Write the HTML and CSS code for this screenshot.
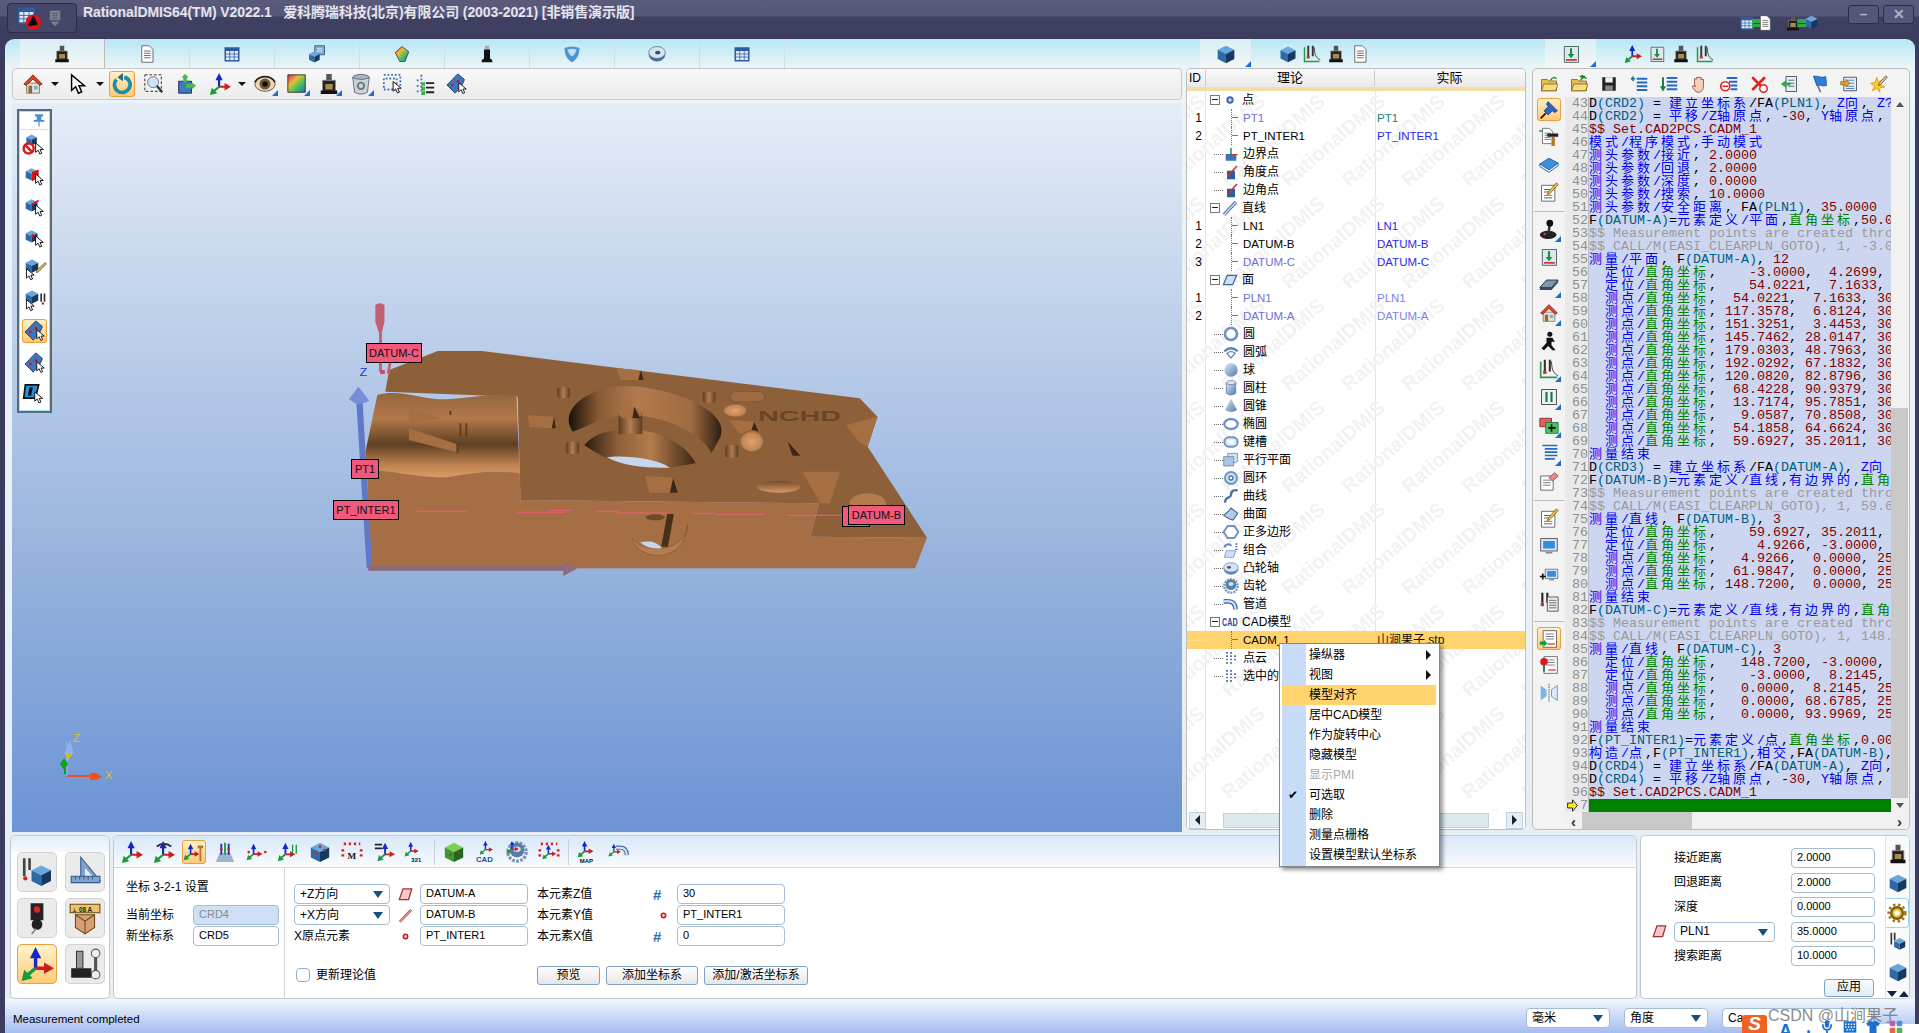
FILE: index.html
```html
<!DOCTYPE html>
<html lang="zh">
<head>
<meta charset="utf-8">
<title>RationalDMIS64</title>
<link rel="stylesheet" href="styles.css">
</head>
<body>
<svg class="defs" width="0" height="0">
<defs>
<linearGradient id="gb" x1="0" y1="0" x2="1" y2="1"><stop offset="0" stop-color="#dfeaf8"/><stop offset="1" stop-color="#4f78b0"/></linearGradient>
<symbol id="cube" viewBox="0 0 24 24"><path fill="#6aa6de" d="M12 2 22 7 12 12 2 7z"/><path fill="#2e6aa8" d="M2 7 12 12V23L2 18z"/><path fill="#16395f" d="M22 7 12 12V23L22 18z"/></symbol>
<symbol id="cur" viewBox="0 0 24 24"><path fill="#fff" stroke="#000" stroke-width="1.6" d="M5 2V19L9.500 15 12.500 22 16 20.500 13 13.800H19z"/></symbol>
<symbol id="home" viewBox="0 0 24 24"><path fill="#e8e2d2" stroke="#777" d="M5 11H19V22H5z"/><path fill="#d8452a" stroke="#8a2412" d="M12 2 22 12 19.500 13.500 12 6.500 4.500 13.500 2 12z"/><path fill="#8c6a3a" d="M7 14H11V22H7z"/><path fill="#7fb0e0" d="M13 14H17V18H13z"/></symbol>
<symbol id="spin" viewBox="0 0 24 24"><path fill="none" stroke="#1c8fa8" stroke-width="4" d="M14.500 4.500A8.500 8.500 0 1 1 6 7"/><path fill="#1c6f8a" d="M13 0V9L7 4.500z"/></symbol>
<symbol id="zoomd" viewBox="0 0 24 24"><path fill="none" stroke="#222" stroke-dasharray="3 2" d="M2 2H20V20H2z"/><circle cx="11" cy="10" r="6" fill="#cfe2f5" stroke="#778"/><path stroke="#333" stroke-width="2.500" d="M15 14 21 21"/></symbol>
<symbol id="fit" viewBox="0 0 24 24"><path fill="#3d7cc0" stroke="#225" d="M4 9H18V22H4z"/><path fill="#4cb848" d="M11 1 15 5H13V10H9V5H7z"/><path fill="#4cb848" d="M23 14 18 18V16H12V12H18V10z"/></symbol>
<symbol id="axes" viewBox="0 0 24 24"><path stroke="#1428c8" stroke-width="2.400" d="M11 15V6"/><path fill="#1428c8" d="M11 0 15 8H7z"/><path stroke="#c81e1e" stroke-width="2.400" d="M11 15H19"/><path fill="#c81e1e" d="M24 15 17 19V11z"/><path stroke="#1a9a3a" stroke-width="2.400" d="M11 15 5 20"/><path fill="#1a9a3a" d="M1 24 3 16 9 22z"/></symbol>
<symbol id="eye" viewBox="0 0 24 24"><ellipse cx="12" cy="12" rx="11" ry="8" fill="#e9d7b8" stroke="#6b5234"/><circle cx="12" cy="12" r="6" fill="#6e5a38"/><circle cx="12" cy="12" r="3" fill="#111"/><path stroke="#2a2a2a" stroke-width="2" fill="none" d="M1 10C6 2 18 2 23 10"/></symbol>
<linearGradient id="rb" x1="0" y1="0" x2="1" y2="1"><stop offset="0" stop-color="#e02060"/><stop offset=".35" stop-color="#e8c030"/><stop offset=".65" stop-color="#40c060"/><stop offset="1" stop-color="#3060e0"/></linearGradient>
<symbol id="colr" viewBox="0 0 24 24"><path fill="url(#rb)" stroke="#333" d="M2 2H21V21H2z"/></symbol>
<symbol id="gem" viewBox="0 0 24 24"><path fill="url(#rb)" stroke="#333" d="M12 2 21 9 16 22H9L3 10z"/></symbol>
<symbol id="probe" viewBox="0 0 24 24"><path fill="#555" d="M9 1H15V8H9z"/><path fill="#222" stroke="#888" d="M5 8H19V20H5z"/><path fill="#a88c4a" d="M8 12H16V18H8z"/><path fill="#111" d="M3 19H21V23H3z"/></symbol>
<symbol id="blk" viewBox="0 0 24 24"><path fill="#aaa" d="M9 1H15V6H9z"/><path fill="#111" d="M8 6H16V18L19 20V23H5V20L8 18z"/></symbol>
<symbol id="bin" viewBox="0 0 24 24"><ellipse cx="12" cy="5" rx="9" ry="3.500" fill="#a9b4bd" stroke="#667"/><path fill="#c9d2d8" stroke="#667" d="M3 5 5 21Q12 25 19 21L21 5Q12 9 3 5z"/><circle cx="12" cy="14" r="3.500" fill="none" stroke="#677" stroke-width="2"/></symbol>
<symbol id="dots" viewBox="0 0 24 24"><path fill="none" stroke="#3d6fb5" stroke-width="2" stroke-dasharray="2 2" d="M2 2H20V15M4 6H16V18H2V4"/><use href="#cur" x="9" y="8" width="15" height="15"/></symbol>
<symbol id="dotl" viewBox="0 0 24 24"><path stroke="#3d6fb5" stroke-width="2" stroke-dasharray="2 2" fill="none" d="M8 2V22M3 8H6M3 14H6M3 20H6"/><path stroke="#222" stroke-width="2" d="M13 11H22M13 16H22M13 21H22"/><path fill="#38b048" d="M8 10H12V14H8zM8 15H12V19H8zM8 20H12V24H8z"/></symbol>
<symbol id="surf" viewBox="0 0 24 24"><path fill="#3f74b8" stroke="#1d3e70" d="M1 13C6 9 8 5 13 1L20 7C19 12 14 18 10 22z"/><circle cx="7" cy="13" r="1.300" fill="#e00"/><circle cx="13" cy="9" r="1.300" fill="#e00"/><use href="#cur" x="11" y="9" width="14" height="15"/></symbol>
<symbol id="page" viewBox="0 0 24 24"><path fill="#fff" stroke="#444" d="M5 1H15L20 6V23H5z"/><path stroke="#444" d="M8 8H17M8 11H17M8 14H17M8 17H17"/></symbol>
<symbol id="tbl" viewBox="0 0 24 24"><path fill="#2d5c9e" d="M2 3H22V22H2z"/><path fill="#dfeaf6" d="M4 8H20V20H4z"/><path stroke="#2d5c9e" d="M4 12H20M4 16H20M9 8V20M15 8V20"/></symbol>
<symbol id="cubep" viewBox="0 0 24 24"><path fill="#7fb0e0" stroke="#245" d="M9 1H22V13H9z"/><path stroke="#fff" d="M12 5H19M12 8H19"/><use href="#cube" x="0" y="7" width="17" height="17"/></symbol>
<symbol id="shld" viewBox="0 0 24 24"><path fill="#4f93cc" d="M2 4Q12 0 22 4C22 13 18 20 12 23 6 20 2 13 2 4z"/><path fill="#bfe0f5" d="M6 6Q12 4 18 6 16 14 12 15 8 14 6 6z"/></symbol>
<symbol id="disc" viewBox="0 0 24 24"><ellipse cx="12" cy="13" rx="11" ry="9" fill="#4d6f9e"/><ellipse cx="12" cy="10" rx="11" ry="8" fill="#d9e3ef" stroke="#4d6f9e"/><ellipse cx="13" cy="10" rx="3.500" ry="2.500" fill="#2d4d7c"/></symbol>
<symbol id="pin" viewBox="0 0 24 24"><path fill="#2f66c0" stroke="#123a80" d="M11 2 22 13 19 15 16 13 11 18 6 13 11 8 9 5z"/><path stroke="#111" stroke-width="2" d="M8 16 2 22"/></symbol>
<symbol id="hamm" viewBox="0 0 24 24"><use href="#page" x="0" y="0" width="20" height="24"/><path fill="#222" d="M10 9H23V13H10z"/><path fill="#b5762e" d="M15 13H19V24H15z"/><path stroke="#1aa048" stroke-width="2" d="M0 6H5"/></symbol>
<symbol id="book" viewBox="0 0 24 24"><path fill="#3f8ed8" stroke="#1c5c9c" d="M1 12 12 5 23 11 12 19z"/><path fill="#e6eef6" stroke="#1c5c9c" d="M1 12 12 19 23 11V14L12 22 1 15z"/></symbol>
<symbol id="note" viewBox="0 0 24 24"><path fill="#fff" stroke="#555" d="M3 4H19V23H3z"/><path stroke="#c33" d="M6 16H16"/><path stroke="#444" d="M6 9H13M6 12H13M6 19H16"/><path fill="#f0c040" stroke="#7a5a14" d="M21 1 23 3 13 14 10 15 11 12z"/></symbol>
<symbol id="joy" viewBox="0 0 24 24"><ellipse cx="11" cy="19" rx="10" ry="5" fill="#222"/><path stroke="#333" stroke-width="3" d="M11 18 13 7"/><circle cx="13" cy="5" r="4" fill="#111"/><circle cx="7" cy="18" r="1.500" fill="#e33"/></symbol>
<symbol id="down" viewBox="0 0 24 24"><path fill="#dfe6ee" stroke="#355" d="M4 3H21V22H4z"/><path stroke="#149040" stroke-width="2.500" d="M12 5V13"/><path fill="#149040" d="M8 12H16L12 17z"/><path stroke="#c33" stroke-width="2" d="M6 19H19"/></symbol>
<symbol id="plate" viewBox="0 0 24 24"><path fill="#7f95ae" stroke="#223" d="M1 15 9 6H23L15 15z"/><path fill="#3a4a5c" d="M1 15H15L23 6V9L15 18H1z"/></symbol>
<symbol id="run" viewBox="0 0 24 24"><circle cx="13" cy="4" r="3" fill="#111"/><path fill="#111" d="M9 8H16L19 13 15 13 15 17 20 23H16L11 18 6 23 3 21 9 14z"/></symbol>
<symbol id="trn" viewBox="0 0 24 24"><path stroke="#333" stroke-width="2.500" d="M7 1V15M13 1V15"/><path fill="#c33" d="M5 14H9V18H5z"/><path fill="none" stroke="#2a9a4a" stroke-width="2" d="M2 3V22H22"/><path fill="none" stroke="#222" d="M15 3C15 13 18 18 23 20"/></symbol>
<symbol id="arrv" viewBox="0 0 24 24"><path fill="#e8eef2" stroke="#333" d="M3 3H21V21H3z"/><path stroke="#147a3a" stroke-width="2.500" d="M9 6V18M15 6V18"/></symbol>
<symbol id="pls" viewBox="0 0 24 24"><path fill="#e06060" stroke="#822" d="M1 4H15V14H1z"/><path fill="#50c050" stroke="#175" d="M8 9H23V22H8z"/><path stroke="#111" stroke-width="2" d="M15 11V20M11 15.500H20"/></symbol>
<symbol id="lins" viewBox="0 0 24 24"><path stroke="#2468c8" stroke-width="2" d="M4 3H22M7 7H22M7 11H22M7 15H22M7 19H19"/></symbol>
<symbol id="eras" viewBox="0 0 24 24"><path fill="#fff" stroke="#555" d="M2 6H17V23H2z"/><path stroke="#666" d="M5 11H14M5 14H14M5 17H14"/><path fill="#e88a8a" stroke="#844" d="M12 8 19 2 23 6 16 12z"/></symbol>
<symbol id="mon" viewBox="0 0 24 24"><path fill="#dce3ea" stroke="#445" d="M2 3H22V18H2z"/><path fill="#2f8fe0" d="M5 6H19V15H5z"/><path fill="#889" d="M8 19H16V21H8z"/></symbol>
<symbol id="monp" viewBox="0 0 24 24"><use href="#mon" x="6" y="4" width="18" height="18"/><path stroke="#111" stroke-width="2" d="M1 15H8M4.500 11.500V18.500"/></symbol>
<symbol id="prl" viewBox="0 0 24 24"><path stroke="#222" stroke-width="2.500" d="M4 1V13M10 1V13"/><path fill="#c33" d="M2 13H6V17H2z"/><path fill="#eee" stroke="#444" d="M10 6H23V23H10z"/><path stroke="#555" d="M12 10H21M12 13H21M12 16H21M12 19H21"/></symbol>
<symbol id="sel" viewBox="0 0 24 24"><path fill="#fff" stroke="#555" d="M5 2H21V22H5z"/><path stroke="#667" d="M8 6H18M8 9H18M8 12H18"/><path stroke="#c33" stroke-width="1.500" d="M10 18H19"/><path fill="#1a9a3a" d="M1 15H6V13L10 17 6 21V19H1z"/></symbol>
<symbol id="redp" viewBox="0 0 24 24"><path fill="#fff" stroke="#555" d="M6 2H22V22H6z"/><path stroke="#667" d="M9 6H19M9 9H19M9 12H19"/><path stroke="#c33" stroke-width="1.500" d="M11 18H20"/><circle cx="6" cy="8" r="4.500" fill="#d21e1e"/><path stroke="#173" stroke-width="2" d="M6 12V20"/></symbol>
<symbol id="mirr" viewBox="0 0 24 24"><path fill="#7fb4e8" d="M2 3 9 8V16L2 21z"/><path stroke="#444" stroke-dasharray="2 1" d="M12 1V23"/><path fill="#dbe9f8" stroke="#5a8cc8" d="M22 3 15 8V16L22 21z"/></symbol>
<symbol id="foldr" viewBox="0 0 24 24"><path fill="#e8c050" stroke="#7a5a14" d="M2 6H10L12 8H22V21H2z"/><path fill="#f6dc80" stroke="#7a5a14" d="M5 12H24L21 21H2z"/><path stroke="#2a9a3a" stroke-width="2" fill="none" d="M14 7Q18 1 22 5"/></symbol>
<symbol id="fpl" viewBox="0 0 24 24"><use href="#foldr"/><path stroke="#1a7a2a" stroke-width="2" d="M13 2H20M16.500 0V5"/></symbol>
<symbol id="save" viewBox="0 0 24 24"><path fill="#222" d="M3 3H21V21H3z"/><path fill="#eee" d="M7 3H17V10H7z"/><path fill="#888" d="M7 14H17V21H7z"/></symbol>
<symbol id="lst" viewBox="0 0 24 24"><path stroke="#2468c8" stroke-width="2.400" d="M9 5H23M9 10H23M9 15H23M9 20H23"/><path fill="none" stroke="#1a7a9a" stroke-width="2" d="M7 5H2M5 2 2 5 5 8"/></symbol>
<symbol id="lsd" viewBox="0 0 24 24"><path stroke="#2468c8" stroke-width="2.400" d="M9 4H23M9 9H23M9 14H23M9 19H23"/><path stroke="#147a3a" stroke-width="2.500" d="M4 3V17"/><path fill="#147a3a" d="M0 15H8L4 22z"/></symbol>
<symbol id="hand" viewBox="0 0 24 24"><path fill="#f4d0b8" stroke="#80321c" d="M6 11V5H9V3H12V3.500H15V6H18V14C18 20 15 23 11 23 8 23 5 20 3 15L5 14 7 16z"/></symbol>
<symbol id="lno" viewBox="0 0 24 24"><path stroke="#2468c8" stroke-width="2.400" d="M9 4H23M12 9H23M14 14H23M14 19H23"/><circle cx="7" cy="15" r="6" fill="#fff" stroke="#d22" stroke-width="2.200"/><path stroke="#d22" stroke-width="2.200" d="M3 15H11"/></symbol>
<symbol id="xno" viewBox="0 0 24 24"><path stroke="#d8281e" stroke-width="3.500" d="M3 3 20 20M20 3 3 20"/><circle cx="18" cy="18" r="5" fill="#fff" stroke="#d22" stroke-width="2"/></symbol>
<symbol id="pgl" viewBox="0 0 24 24"><path fill="#e8eef6" stroke="#234" d="M8 2H22V22H8z"/><path stroke="#345" d="M11 7H19M11 11H19M11 15H19"/><path fill="#2fa84a" d="M1 12 8 7V10H14V14H8V17z"/></symbol>
<symbol id="flag" viewBox="0 0 24 24"><path stroke="#766" stroke-width="2" d="M5 1 14 23"/><path fill="#2f7fd8" stroke="#16508c" d="M5 2C10 0 14 5 21 2L22 14C16 16 12 12 9 14z"/></symbol>
<symbol id="pgr" viewBox="0 0 24 24"><path fill="#e8eef6" stroke="#234" d="M5 3H22V21H5z"/><path stroke="#2468c8" d="M8 7H19M8 11H19M8 15H19M8 18H19"/><path fill="#f0a020" stroke="#8a5a10" d="M1 9H8V6L13 11 8 16V13H1z"/></symbol>
<symbol id="burst" viewBox="0 0 24 24"><path fill="#f8d020" stroke="#d89010" d="M9 3 11 9 17 7 14 13 20 16 13 17 13 23 9 18 3 21 6 15 1 11 7 10z"/><path fill="#d8c8a0" stroke="#5a4a2a" d="M21 1 23 3 14 13 11 14 12 11z"/></symbol>
<symbol id="pts" viewBox="0 0 24 24"><path stroke="#3b5fa5" stroke-width="2.500" stroke-dasharray="2.500 2.500" d="M6 3V21M12 3V21M18 8V16"/></symbol>
<symbol id="pnt" viewBox="0 0 24 24"><circle cx="12" cy="12" r="4" fill="#cfe0f4" stroke="#3a68a8" stroke-width="3"/></symbol>
<symbol id="lin" viewBox="0 0 24 24"><path stroke="#3f6fb0" stroke-width="5" d="M3 22 21 3"/><path stroke="#cfe0f4" stroke-width="2" d="M3 22 21 3"/></symbol>
<symbol id="pla" viewBox="0 0 24 24"><path fill="#cfe0f4" stroke="#39679f" stroke-width="1.800" d="M8 5H22L16 19H2z"/></symbol>
<symbol id="cir" viewBox="0 0 24 24"><circle cx="12" cy="12" r="9" fill="#fff" stroke="#6f94c4" stroke-width="4"/></symbol>
<symbol id="arc" viewBox="0 0 24 24"><path fill="none" stroke="#5f86ba" stroke-width="3.500" d="M2 11Q12 2 22 11"/><path fill="#fff" stroke="#5f86ba" stroke-width="2" d="M6 14Q12 9 18 14L12 21z"/></symbol>
<symbol id="sph" viewBox="0 0 24 24"><circle cx="12" cy="12" r="10" fill="url(#gb)"/></symbol>
<symbol id="cyl" viewBox="0 0 24 24"><path fill="url(#gb)" stroke="#4a6a9a" d="M5 4H19V20Q12 25 5 20z"/><ellipse cx="12" cy="4" rx="7" ry="3" fill="#dce8f6" stroke="#4a6a9a"/></symbol>
<symbol id="con" viewBox="0 0 24 24"><path fill="url(#gb)" d="M12 1 21 18Q12 24 3 18z"/></symbol>
<symbol id="ell" viewBox="0 0 24 24"><ellipse cx="12" cy="12" rx="10" ry="7.500" fill="#fff" stroke="#6f94c4" stroke-width="3.500"/></symbol>
<symbol id="slt" viewBox="0 0 24 24"><rect x="2" y="5" width="20" height="14" rx="7" fill="#dce8f6" stroke="#6f94c4" stroke-width="3"/><rect x="7" y="9" width="10" height="6" rx="3" fill="#fff"/></symbol>
<symbol id="par" viewBox="0 0 24 24"><path fill="#cfe0f4" stroke="#4a73a8" d="M7 2H22V14L18 16H7z"/><path fill="#a9c4e4" stroke="#4a73a8" d="M1 7H16V21H1z"/></symbol>
<symbol id="tor" viewBox="0 0 24 24"><circle cx="12" cy="12" r="9" fill="#cfe0f4" stroke="#6f94c4" stroke-width="3"/><circle cx="12" cy="12" r="3" fill="#fff" stroke="#4a73a8" stroke-width="2"/></symbol>
<symbol id="crv" viewBox="0 0 24 24"><path fill="none" stroke="#4a73a8" stroke-width="3.500" d="M3 22C3 12 12 16 12 10 12 4 18 2 22 4"/></symbol>
<symbol id="srf" viewBox="0 0 24 24"><path fill="#b4cbe8" stroke="#3c6496" stroke-width="1.600" d="M1 14 9 7 12 3 22 11 15 21 9 19z"/></symbol>
<symbol id="hex" viewBox="0 0 24 24"><path fill="#fff" stroke="#6f94c4" stroke-width="3" d="M7 3H17L23 12 17 21H7L1 12z"/></symbol>
<symbol id="grp" viewBox="0 0 24 24"><path fill="none" stroke="#5f86ba" stroke-width="3" d="M2 8C4 2 12 2 12 6"/><path fill="#cfe0f4" stroke="#5f86ba" d="M5 13H19L16 23H2z"/><path stroke="#3f6fb0" stroke-width="3" stroke-dasharray="2 2" d="M20 2V13"/></symbol>
<symbol id="cam" viewBox="0 0 24 24"><ellipse cx="12" cy="14" rx="11" ry="8" fill="#5f86ba"/><ellipse cx="12" cy="11" rx="11" ry="7" fill="#d4e2f2" stroke="#5f86ba"/><ellipse cx="9" cy="11" rx="3" ry="2" fill="#456"/></symbol>
<symbol id="ger" viewBox="0 0 24 24"><circle cx="12" cy="12" r="10" fill="none" stroke="#7793b8" stroke-width="3.500" stroke-dasharray="3 1.500"/><circle cx="12" cy="10" r="8" fill="#5a7ca8"/><ellipse cx="12" cy="9" rx="4" ry="3" fill="#cfe0f4"/></symbol>
<symbol id="pip" viewBox="0 0 24 24"><path fill="none" stroke="#3f6fb0" stroke-width="7" d="M1 8H8Q18 8 19 20"/><path fill="none" stroke="#dce8f6" stroke-width="3" d="M1 8H8Q18 8 19 20"/></symbol>
<symbol id="bpt" viewBox="0 0 24 24"><path fill="#3f74b8" d="M4 12H20V22H4z"/><path stroke="#147a3a" stroke-width="2" d="M12 13V3"/><path stroke="#c33" stroke-width="2" d="M12 13H22"/></symbol>
<symbol id="apt" viewBox="0 0 24 24"><path fill="#2e5c98" d="M6 10H18V23H6z"/><path stroke="#c33" stroke-width="2.500" d="M7 18 21 3"/></symbol>
<symbol id="fpla" viewBox="0 0 24 24"><path fill="#f4c8c8" stroke="#a03030" stroke-width="2" d="M8 3H22L17 20H2z"/></symbol>
<symbol id="flin" viewBox="0 0 24 24"><path stroke="#c04040" stroke-width="4" d="M3 22 21 3"/><path stroke="#f4d8d8" stroke-width="1.500" d="M3 22 21 3"/></symbol>
<symbol id="fpt" viewBox="0 0 24 24"><circle cx="12" cy="12" r="3.500" fill="#f4c8c8" stroke="#c02020" stroke-width="2.500"/></symbol>
</defs>
</svg>

<div class="app">
  <header class="titlebar">
    <div class="appbtn">
      <svg class="ic26" viewBox="0 0 30 30"><use href="#tbl" width="24" height="24"/><circle cx="20" cy="20" r="9" fill="#d81818"/><path stroke="#111" stroke-width="3" d="M15 24 20 15 24 23"/></svg>
      <svg class="ic20" viewBox="0 0 24 24"><path fill="#7d7f94" stroke="#5c5e74" d="M5 2H19V15H5z"/><path stroke="#50526a" d="M8 6H16M8 9H16M8 12H16"/><path fill="#7d7f94" d="M6 17H18L12 23z"/></svg>
    </div>
    <div class="title">RationalDMIS64(TM) V2022.1 &nbsp; 爱科腾瑞科技(北京)有限公司 (2003-2021) [非销售演示版]</div>
    <div class="winr">
      <svg class="ic24" viewBox="0 0 34 24"><use href="#tbl" x="0" y="2" width="16" height="20"/><use href="#page" x="18" y="2" width="16" height="20"/><path fill="#2fa84a" d="M13 8H21V12H13zM13 13H21V16H13z"/></svg>
      <svg class="ic24 wmid" viewBox="0 0 34 24"><use href="#probe" x="0" y="2" width="16" height="20"/><use href="#cube" x="19" y="2" width="15" height="18"/><path fill="#2fa84a" d="M13 8H21V12H13zM13 13H21V16H13z"/></svg>
      <div class="winb">–</div><div class="winb">✕</div>
    </div>
  </header>

  <div class="frame">
    <div class="upper">
      <section class="viewcol">
        <nav class="tabs">
          <div class="tab on"><svg class="i"><use href="#probe"/></svg></div>
          <div class="tab"><svg class="i"><use href="#page"/></svg></div>
          <div class="tab"><svg class="i"><use href="#tbl"/></svg></div>
          <div class="tab"><svg class="i"><use href="#cubep"/></svg></div>
          <div class="tab"><svg class="i"><use href="#gem"/></svg></div>
          <div class="tab"><svg class="i"><use href="#blk"/></svg></div>
          <div class="tab"><svg class="i"><use href="#shld"/></svg></div>
          <div class="tab"><svg class="i"><use href="#disc"/></svg></div>
          <div class="tab"><svg class="i"><use href="#tbl"/></svg></div>
        </nav>
        <div class="toolbar">
          <span class="bt"><svg class="i"><use href="#home"/></svg></span><span class="car"></span>
          <span class="bt cm"><svg class="i"><use href="#cur"/></svg></span><span class="car"></span>
          <span class="bt sl sp"><svg class="i"><use href="#spin"/></svg></span>
          <span class="bt sx"><svg class="i"><use href="#zoomd"/></svg></span>
          <span class="bt"><svg class="i"><use href="#fit"/></svg></span>
          <span class="bt ax"><svg class="i"><use href="#axes"/></svg></span><span class="car cn"></span>
          <span class="bt co"><svg class="i"><use href="#eye"/></svg></span>
          <span class="bt co"><svg class="i"><use href="#colr"/></svg></span>
          <span class="bt co"><svg class="i"><use href="#probe"/></svg></span>
          <span class="bt co"><svg class="i"><use href="#bin"/></svg></span>
          <span class="bt"><svg class="i"><use href="#dots"/></svg></span>
          <span class="bt"><svg class="i"><use href="#dotl"/></svg></span>
          <span class="bt"><svg class="i"><use href="#surf"/></svg></span>
        </div>
        <div class="viewport">
          <svg class="model" viewBox="0 0 1568 900" preserveAspectRatio="none">
            <defs>
              <linearGradient id="wav" x1="0" y1="310" x2="0" y2="565" gradientUnits="userSpaceOnUse"><stop offset="0" stop-color="#96653e"/><stop offset=".3" stop-color="#b27849"/><stop offset=".6" stop-color="#5f3f24"/><stop offset=".85" stop-color="#c08553"/><stop offset="1" stop-color="#dc9d68"/></linearGradient>
              <linearGradient id="bor" x1="0" y1="0" x2="1" y2="0"><stop offset="0" stop-color="#1a1108"/><stop offset=".2" stop-color="#8a5c36"/><stop offset=".45" stop-color="#b37a4c"/><stop offset=".8" stop-color="#a06b42"/><stop offset="1" stop-color="#2c1c0e"/></linearGradient>
              <linearGradient id="hol" x1="0" y1="0" x2="1" y2="0"><stop offset="0" stop-color="#2a1c0e"/><stop offset=".3" stop-color="#8d5f39"/><stop offset=".6" stop-color="#b47b4c"/><stop offset="1" stop-color="#3a2614"/></linearGradient>
              <linearGradient id="pil" x1="0" y1="0" x2="1" y2="0"><stop offset="0" stop-color="#5c3d22"/><stop offset=".5" stop-color="#b57c4e"/><stop offset="1" stop-color="#5c3d22"/></linearGradient>
              <radialGradient id="bal" cx=".5" cy=".55" r=".55"><stop offset="0" stop-color="#e2a36d"/><stop offset=".75" stop-color="#c08553"/><stop offset="1" stop-color="#7d5430"/></radialGradient>
              <linearGradient id="elg" x1="0" y1="0" x2="0" y2="1"><stop offset="0" stop-color="#6f4a2a"/><stop offset="1" stop-color="#d89a66"/></linearGradient>
            </defs>
            <polygon fill="#8e603a" points="165,305 175,240 298,183 410,183 1365,325 1410,380 1385,470 1535,743 1240,740 1262,640 507,630 500,320"/>
            <polygon fill="#a56e43" points="1330,405 1410,380 1385,470 1365,458"/>
            <polygon fill="#a56e43" points="1220,545 1315,545 1290,640 1265,640"/>
            <polygon fill="#a66e44" points="118,480 140,540 505,545 507,630 1262,640 1240,740 1535,743 1505,835 125,835"/>
            <path fill="url(#wav)" d="M145,315C200,295 260,330 320,328C380,325 450,305 497,320L505,550C450,540 400,545 320,562C250,565 180,540 118,540L115,485Z"/>
            <polygon fill="#a56e43" points="225,355 305,385 225,400"/>
            <polygon fill="#a56e43" points="225,415 345,462 345,487 225,450"/>
            <path stroke="#5f3f24" stroke-width="5" d="M330,362V375M355,400V440M370,400V440M348,460V490"/>
            <path fill="url(#bor)" d="M640,425C600,360 680,290 770,288C880,288 1040,360 1013,440L990,490C960,410 800,340 700,395C670,410 650,420 640,425Z"/>
            <path fill="url(#hol)" d="M668,465C700,420 760,415 800,420C870,425 930,470 950,520L885,533L725,505C700,490 680,475 668,465Z"/>
            <path fill="#c5d6ed" d="M725,502C770,495 850,505 885,533C830,535 770,530 725,502Z"/>
            <rect x="755" y="370" width="60" height="62" fill="url(#pil)"/>
            <ellipse cx="785" cy="370" rx="30" ry="18" fill="#a56e43"/>
            <polygon fill="#3c2614" points="795,350 810,385 790,385"/>
            <polygon fill="#a56e43" points="750,235 805,240 810,270 760,270"/>
            <polygon fill="#3c2614" points="805,270 812,240 818,270"/>
            <polygon fill="#a56e43" points="525,375 590,380 590,415 530,412"/>
            <polygon fill="#3c2614" points="586,415 592,380 596,415"/>
            <polygon fill="#a56e43" points="823,558 890,562 905,608 833,608"/>
            <polygon fill="#3c2614" points="885,608 893,565 905,608"/>
            <rect x="600" y="292" width="32" height="33" rx="6" fill="url(#pil)"/>
            <rect x="622" y="455" width="33" height="37" rx="6" fill="url(#pil)"/>
            <rect x="968" y="305" width="32" height="33" rx="6" fill="url(#pil)"/>
            <rect x="1025" y="465" width="33" height="38" rx="6" fill="url(#pil)"/>
            <rect x="1037" y="305" width="88" height="30" rx="15" fill="#a06b42" stroke="#5f3f24"/>
            <ellipse cx="1050" cy="360" rx="30" ry="20" fill="url(#bal)"/>
            <polygon fill="#a56e43" points="1035,390 1100,395 1115,430 1060,430"/>
            <polygon fill="#3c2614" points="1090,425 1098,395 1110,425"/>
            <ellipse cx="1092" cy="452" rx="30" ry="32" fill="url(#bal)"/>
            <text class="mtext" x="1108" y="392" textLength="210" lengthAdjust="spacingAndGlyphs">NCHD</text>
            <polygon fill="#3c2614" points="1183,455 1215,497 1195,497"/>
            <ellipse cx="1160" cy="590" rx="55" ry="18" fill="url(#elg)"/>
            <ellipse cx="1385" cy="640" rx="46" ry="30" fill="#b47b4c"/>
            <path fill="#b57c4e" stroke="#5f3f24" d="M790,745C800,810 920,830 930,705C925,760 880,775 860,775C830,775 805,770 790,745Z"/>
            <path fill="#c5d6ed" d="M810,757C830,752 850,752 865,775C840,778 820,770 810,757Z"/>
            <polygon fill="#4a3018" points="878,672 895,672 880,770 863,770"/>
            <ellipse cx="848" cy="682" rx="24" ry="9" fill="#6f4a2a"/>
            <path fill="none" stroke="#ef5c80" stroke-width="3" d="M245,664H372M498,667H622M578,661H638M695,664H755M750,669H878M938,670H1000M1002,673H1125M1180,676H1340"/>
            <path fill="#5f78c8" d="M92,340H108L132,835H118Z"/>
            <path fill="#6f87d6" opacity=".9" d="M97,290 125,332 97,346 73,328Z"/>
            <path fill="#8a6878" d="M122,828H620V842H122Z"/>
            <path fill="#8f6a80" d="M615,815 650,836 615,858Z"/>
            <path fill="#c25f70" d="M140,45Q150,35 163,45V95L157,125H148L140,95Z"/>
            <path stroke="#c25f70" stroke-width="7" d="M153,120V245M178,215 172,250"/>
            <rect x="152" y="240" width="12" height="12" fill="#d04a5c"/>
            <text class="mz" x="100" y="258">Z</text>
          </svg>
          <div class="lab lab-c">DATUM-C</div>
          <div class="lab lab-p">PT1</div>
          <div class="lab lab-i">PT_INTER1</div>
          <div class="lab lab-bb"></div>
          <div class="lab lab-b">DATUM-B</div>

          <svg class="triad" viewBox="0 0 120 120">
            <path stroke="#8aa8e8" stroke-width="2" d="M27 76V42"/>
            <path fill="#8fb0f0" d="M30 40 34 54H24Z"/>
            <path stroke="#d8c020" stroke-width="2" d="M28 54V60M26 53 28 57M32 53 29 57"/>
            <path fill="#10a010" d="M24 58 28 64 24 70 20 64Z"/>
            <path stroke="#10a010" stroke-width="2" d="M25 66V74"/>
            <path stroke="#f05020" stroke-width="2" d="M27 76H52"/>
            <path fill="#f05020" d="M50 73H56L62 77 56 80H50Z"/>
            <text class="tz" x="33" y="42">Z</text>
            <text class="tz" x="65" y="79">X</text>
          </svg>

          <aside class="pinpanel">
            <div class="pinhead"><svg class="i14" viewBox="0 0 24 24"><path fill="#4a8fd0" d="M5 2H19V6H16V12H21V15H13V23H11V15H3V12H8V6H5z"/></svg></div>
            <span class="pb"><svg class="i26" viewBox="0 0 30 30"><use href="#cube" x="4" y="0" width="15" height="15"/><circle cx="8" cy="18" r="6" fill="#fff" stroke="#d61c1c" stroke-width="3"/><path stroke="#d61c1c" stroke-width="3" d="M4 14 12 22"/><use href="#cur" x="13" y="9" width="16" height="18"/></svg></span>
            <span class="pb"><svg class="i26" viewBox="0 0 30 30"><use href="#cube" x="3" y="3" width="17" height="17"/><path fill="#e01010" d="M12 9 20 6V16L12 20z"/><use href="#cur" x="13" y="9" width="16" height="18"/></svg></span>
            <span class="pb"><svg class="i26" viewBox="0 0 30 30"><use href="#cube" x="3" y="3" width="17" height="17"/><path stroke="#e01010" stroke-width="2" d="M11 11 20 6"/><use href="#cur" x="13" y="9" width="16" height="18"/></svg></span>
            <span class="pb"><svg class="i26" viewBox="0 0 30 30"><use href="#cube" x="3" y="3" width="17" height="17"/><circle cx="13" cy="11" r="2" fill="#e01010"/><use href="#cur" x="13" y="9" width="16" height="18"/></svg></span>
            <span class="pb"><svg class="i26" viewBox="0 0 30 30"><use href="#cube" x="3" y="1" width="18" height="18"/><use href="#cur" x="2" y="11" width="16" height="18"/><path fill="#f0c040" stroke="#555" d="M28 6 29 8 20 17 17 18 18 15z"/></svg></span>
            <span class="pb"><svg class="i26" viewBox="0 0 30 30"><use href="#cube" x="3" y="1" width="18" height="18"/><use href="#cur" x="2" y="11" width="16" height="18"/><path stroke="#333" stroke-width="2" d="M23 6V16M27 6V16"/><circle cx="25" cy="18" r="1.500" fill="#d22"/></svg></span>
            <span class="pb sl"><svg class="i"><use href="#surf"/></svg></span>
            <span class="pb"><svg class="i"><use href="#surf"/></svg></span>
            <span class="pb"><svg class="i26" viewBox="0 0 30 30"><path fill="#2a90dd" stroke="#111" stroke-width="2" d="M4 4H20L16 20H2z"/><path fill="#111" d="M9 7H13L11 17H7z"/><use href="#cur" x="12" y="10" width="16" height="18"/></svg></span>
          </aside>
        </div>
      </section>

      <section class="treecol">
        <div class="subtabs">
          <div class="subtab co"><svg class="i"><use href="#cube"/></svg></div>
          <svg class="i st1"><use href="#cube"/></svg>
          <svg class="i"><use href="#trn"/></svg>
          <svg class="i"><use href="#probe"/></svg>
          <svg class="i"><use href="#page"/></svg>
        </div>
        <div class="treepanel">
          <div class="thead"><span class="hid">ID</span><span class="hth">理论</span><span class="hac">实际</span></div>
          <div class="tbody">
            <svg class="wm" width="100%" height="100%">
              <defs><pattern id="wmp" width="60" height="102" patternUnits="userSpaceOnUse">
                <g class="wmt"><text transform="translate(-18 97) rotate(-41)">RationalDMIS</text><text transform="translate(42 97) rotate(-41)">RationalDMIS</text><text transform="translate(-78 97) rotate(-41)">RationalDMIS</text><text transform="translate(-138 97) rotate(-41)">RationalDMIS</text></g>
              </pattern></defs>
              <rect width="100%" height="100%" fill="url(#wmp)"/>
            </svg>
            <div class="rows">
              <div class="row"><span class="id"></span><span class="th"><span class="ex"></span><svg class="ti"><use href="#pnt"/></svg>点</span><span class="ac"></span></div>
              <div class="row"><span class="id">1</span><span class="th ch pu"><span class="el"></span>PT1</span><span class="ac lt gn">PT1</span></div>
              <div class="row"><span class="id">2</span><span class="th ch"><span class="el"></span>PT_INTER1</span><span class="ac lt bl">PT_INTER1</span></div>
              <div class="row"><span class="id"></span><span class="th gp"><span class="dt"></span><svg class="ti"><use href="#bpt"/></svg>边界点</span><span class="ac"></span></div>
              <div class="row"><span class="id"></span><span class="th gp"><span class="dt"></span><svg class="ti"><use href="#apt"/></svg>角度点</span><span class="ac"></span></div>
              <div class="row"><span class="id"></span><span class="th gp"><span class="dt"></span><svg class="ti"><use href="#apt"/></svg>边角点</span><span class="ac"></span></div>
              <div class="row"><span class="id"></span><span class="th"><span class="ex"></span><svg class="ti"><use href="#lin"/></svg>直线</span><span class="ac"></span></div>
              <div class="row"><span class="id">1</span><span class="th ch"><span class="el"></span>LN1</span><span class="ac lt bl">LN1</span></div>
              <div class="row"><span class="id">2</span><span class="th ch"><span class="el"></span>DATUM-B</span><span class="ac lt bl">DATUM-B</span></div>
              <div class="row"><span class="id">3</span><span class="th ch pu"><span class="el"></span>DATUM-C</span><span class="ac lt bl">DATUM-C</span></div>
              <div class="row"><span class="id"></span><span class="th"><span class="ex"></span><svg class="ti"><use href="#pla"/></svg>面</span><span class="ac"></span></div>
              <div class="row"><span class="id">1</span><span class="th ch pu"><span class="el"></span>PLN1</span><span class="ac lt pl">PLN1</span></div>
              <div class="row"><span class="id">2</span><span class="th ch pu"><span class="el"></span>DATUM-A</span><span class="ac lt pl">DATUM-A</span></div>
              <div class="row"><span class="id"></span><span class="th gp"><span class="dt"></span><svg class="ti"><use href="#cir"/></svg>圆</span><span class="ac"></span></div>
              <div class="row"><span class="id"></span><span class="th gp"><span class="dt"></span><svg class="ti"><use href="#arc"/></svg>圆弧</span><span class="ac"></span></div>
              <div class="row"><span class="id"></span><span class="th gp"><span class="dt"></span><svg class="ti"><use href="#sph"/></svg>球</span><span class="ac"></span></div>
              <div class="row"><span class="id"></span><span class="th gp"><span class="dt"></span><svg class="ti"><use href="#cyl"/></svg>圆柱</span><span class="ac"></span></div>
              <div class="row"><span class="id"></span><span class="th gp"><span class="dt"></span><svg class="ti"><use href="#con"/></svg>圆锥</span><span class="ac"></span></div>
              <div class="row"><span class="id"></span><span class="th gp"><span class="dt"></span><svg class="ti"><use href="#ell"/></svg>椭圆</span><span class="ac"></span></div>
              <div class="row"><span class="id"></span><span class="th gp"><span class="dt"></span><svg class="ti"><use href="#slt"/></svg>键槽</span><span class="ac"></span></div>
              <div class="row"><span class="id"></span><span class="th gp"><span class="dt"></span><svg class="ti"><use href="#par"/></svg>平行平面</span><span class="ac"></span></div>
              <div class="row"><span class="id"></span><span class="th gp"><span class="dt"></span><svg class="ti"><use href="#tor"/></svg>圆环</span><span class="ac"></span></div>
              <div class="row"><span class="id"></span><span class="th gp"><span class="dt"></span><svg class="ti"><use href="#crv"/></svg>曲线</span><span class="ac"></span></div>
              <div class="row"><span class="id"></span><span class="th gp"><span class="dt"></span><svg class="ti"><use href="#srf"/></svg>曲面</span><span class="ac"></span></div>
              <div class="row"><span class="id"></span><span class="th gp"><span class="dt"></span><svg class="ti"><use href="#hex"/></svg>正多边形</span><span class="ac"></span></div>
              <div class="row"><span class="id"></span><span class="th gp"><span class="dt"></span><svg class="ti"><use href="#grp"/></svg>组合</span><span class="ac"></span></div>
              <div class="row"><span class="id"></span><span class="th gp"><span class="dt"></span><svg class="ti"><use href="#cam"/></svg>凸轮轴</span><span class="ac"></span></div>
              <div class="row"><span class="id"></span><span class="th gp"><span class="dt"></span><svg class="ti"><use href="#ger"/></svg>齿轮</span><span class="ac"></span></div>
              <div class="row"><span class="id"></span><span class="th gp"><span class="dt"></span><svg class="ti"><use href="#pip"/></svg>管道</span><span class="ac"></span></div>
              <div class="row"><span class="id"></span><span class="th"><span class="ex"></span><span class="cadt">CAD</span>CAD模型</span><span class="ac"></span></div>
              <div class="row rsel"><span class="id"></span><span class="th ch"><span class="el"></span><span class="selt">CADM_1</span></span><span class="ac bk">山涧果子.stp</span></div>
              <div class="row"><span class="id"></span><span class="th gp"><span class="dt"></span><svg class="ti"><use href="#pts"/></svg>点云</span><span class="ac"></span></div>
              <div class="row"><span class="id"></span><span class="th gp"><span class="dt"></span><svg class="ti"><use href="#pts"/></svg>选中的</span><span class="ac"></span></div>
            </div>
          </div>
          <div class="hs">
            <span class="hbtn"><i class="tl"></i></span><span class="htrack"></span><span class="hbtn"><i class="tr"></i></span>
          </div>
        </div>
      </section>

      <section class="codecol">
        <div class="subtabs sc">
          <div class="subtab co"><svg class="i"><use href="#down"/></svg></div>
          <svg class="i st2"><use href="#axes"/></svg>
          <svg class="i"><use href="#down"/></svg>
          <svg class="i"><use href="#probe"/></svg>
          <svg class="i"><use href="#trn"/></svg>
        </div>
        <div class="codepanel">
          <div class="ctools">
            <svg class="i"><use href="#foldr"/></svg><svg class="i"><use href="#fpl"/></svg><svg class="i"><use href="#save"/></svg><svg class="i"><use href="#lst"/></svg><svg class="i"><use href="#lsd"/></svg><svg class="i"><use href="#hand"/></svg><svg class="i"><use href="#lno"/></svg><svg class="i"><use href="#xno"/></svg><svg class="i"><use href="#pgl"/></svg><svg class="i"><use href="#flag"/></svg><svg class="i"><use href="#pgr"/></svg><svg class="i"><use href="#burst"/></svg>
          </div>
          <div class="cgrid">
            <div class="cside">
              <span class="cb sl s1"><svg class="i"><use href="#pin"/></svg></span>
              <span class="cb"><svg class="i"><use href="#hamm"/></svg></span>
              <span class="cb"><svg class="i"><use href="#book"/></svg></span>
              <span class="cb"><svg class="i"><use href="#note"/></svg></span>
              <span class="csep"></span>
              <span class="cb co"><svg class="i"><use href="#joy"/></svg></span>
              <span class="cb"><svg class="i"><use href="#down"/></svg></span>
              <span class="cb co"><svg class="i"><use href="#plate"/></svg></span>
              <span class="cb co"><svg class="i"><use href="#home"/></svg></span>
              <span class="cb"><svg class="i"><use href="#run"/></svg></span>
              <span class="cb co"><svg class="i"><use href="#trn"/></svg></span>
              <span class="cb co"><svg class="i"><use href="#arrv"/></svg></span>
              <span class="cb co"><svg class="i"><use href="#pls"/></svg></span>
              <span class="cb co"><svg class="i"><use href="#lins"/></svg></span>
              <span class="cb"><svg class="i"><use href="#eras"/></svg></span>
              <span class="csep"></span>
              <span class="cb"><svg class="i"><use href="#note"/></svg></span>
              <span class="cb"><svg class="i"><use href="#mon"/></svg></span>
              <span class="cb"><svg class="i"><use href="#monp"/></svg></span>
              <span class="cb"><svg class="i"><use href="#prl"/></svg></span>
              <span class="csep"></span>
              <span class="cb sl s2"><svg class="i"><use href="#sel"/></svg></span>
              <span class="cb"><svg class="i"><use href="#redp"/></svg></span>
              <span class="cb"><svg class="i"><use href="#mirr"/></svg></span>
            </div>
            <div class="editor">
<div class="ln"><span class="no">43</span><span class="cd">D<i class="t">(CRD2)</i> = <i class="k">建立坐标系</i>/FA<i class="t">(PLN1)</i>, <i class="b">Z</i><i class="k">向</i>, <i class="b">Z?</i></span></div>
<div class="ln"><span class="no">44</span><span class="cd">D<i class="t">(CRD2)</i> = <i class="k">平移</i><i class="b">/Z</i><i class="k">轴原点</i>, -<i class="n">30</i>, <i class="b">Y</i><i class="k">轴原点</i>,</span></div>
<div class="ln"><span class="no">45</span><span class="cd"><i class="n">$$ Set.CAD2PCS.CADM_1</i></span></div>
<div class="ln"><span class="no">46</span><span class="cd"><i class="k">模式</i><i class="b">/</i><i class="k">程序模式</i><i class="b">,</i><i class="k">手动模式</i></span></div>
<div class="ln"><span class="no">47</span><span class="cd"><i class="k">测头参数</i><i class="b">/</i><i class="k">接近</i>, <i class="n">2.0000</i></span></div>
<div class="ln"><span class="no">48</span><span class="cd"><i class="k">测头参数</i><i class="b">/</i><i class="k">回退</i>, <i class="n">2.0000</i></span></div>
<div class="ln"><span class="no">49</span><span class="cd"><i class="k">测头参数</i><i class="b">/</i><i class="k">深度</i>, <i class="n">0.0000</i></span></div>
<div class="ln"><span class="no">50</span><span class="cd"><i class="k">测头参数</i><i class="b">/</i><i class="k">搜索</i>, <i class="n">10.0000</i></span></div>
<div class="ln"><span class="no">51</span><span class="cd"><i class="k">测头参数</i><i class="b">/</i><i class="k">安全距离</i>, FA<i class="t">(PLN1)</i>, <i class="n">35.0000</i></span></div>
<div class="ln"><span class="no">52</span><span class="cd">F<i class="t">(DATUM-A)</i>=<i class="k">元素定义</i><i class="b">/</i><i class="k">平面</i>,<i class="g">直角坐标</i>,<i class="n">50.0</i></span></div>
<div class="ln"><span class="no">53</span><span class="cd"><i class="c">$$ Measurement points are created thro</i></span></div>
<div class="ln"><span class="no">54</span><span class="cd"><i class="c">$$ CALL/M(EASI_CLEARPLN_GOTO), 1, -3.0</i></span></div>
<div class="ln"><span class="no">55</span><span class="cd"><i class="k">测量</i><i class="b">/</i><i class="k">平面</i>, F<i class="t">(DATUM-A)</i>, <i class="n">12</i></span></div>
<div class="ln"><span class="no">56</span><span class="cd">  <i class="k">定位</i><i class="b">/</i><i class="g">直角坐标</i>,    <i class="n">-3.0000</i>,  <i class="n">4.2699</i>,</span></div>
<div class="ln"><span class="no">57</span><span class="cd">  <i class="k">定位</i><i class="b">/</i><i class="g">直角坐标</i>,    <i class="n">54.0221</i>,  <i class="n">7.1633</i>,</span></div>
<div class="ln"><span class="no">58</span><span class="cd">  <i class="k">测点</i><i class="b">/</i><i class="g">直角坐标</i>,  <i class="n">54.0221</i>,  <i class="n">7.1633</i>, <i class="n">30</i></span></div>
<div class="ln"><span class="no">59</span><span class="cd">  <i class="k">测点</i><i class="b">/</i><i class="g">直角坐标</i>, <i class="n">117.3578</i>,  <i class="n">6.8124</i>, <i class="n">30</i></span></div>
<div class="ln"><span class="no">60</span><span class="cd">  <i class="k">测点</i><i class="b">/</i><i class="g">直角坐标</i>, <i class="n">151.3251</i>,  <i class="n">3.4453</i>, <i class="n">30</i></span></div>
<div class="ln"><span class="no">61</span><span class="cd">  <i class="k">测点</i><i class="b">/</i><i class="g">直角坐标</i>, <i class="n">145.7462</i>, <i class="n">28.0147</i>, <i class="n">30</i></span></div>
<div class="ln"><span class="no">62</span><span class="cd">  <i class="k">测点</i><i class="b">/</i><i class="g">直角坐标</i>, <i class="n">179.0303</i>, <i class="n">48.7963</i>, <i class="n">30</i></span></div>
<div class="ln"><span class="no">63</span><span class="cd">  <i class="k">测点</i><i class="b">/</i><i class="g">直角坐标</i>, <i class="n">192.0292</i>, <i class="n">67.1832</i>, <i class="n">30</i></span></div>
<div class="ln"><span class="no">64</span><span class="cd">  <i class="k">测点</i><i class="b">/</i><i class="g">直角坐标</i>, <i class="n">120.0820</i>, <i class="n">82.8796</i>, <i class="n">30</i></span></div>
<div class="ln"><span class="no">65</span><span class="cd">  <i class="k">测点</i><i class="b">/</i><i class="g">直角坐标</i>,  <i class="n">68.4228</i>, <i class="n">90.9379</i>, <i class="n">30</i></span></div>
<div class="ln"><span class="no">66</span><span class="cd">  <i class="k">测点</i><i class="b">/</i><i class="g">直角坐标</i>,  <i class="n">13.7174</i>, <i class="n">95.7851</i>, <i class="n">30</i></span></div>
<div class="ln"><span class="no">67</span><span class="cd">  <i class="k">测点</i><i class="b">/</i><i class="g">直角坐标</i>,   <i class="n">9.0587</i>, <i class="n">70.8508</i>, <i class="n">30</i></span></div>
<div class="ln"><span class="no">68</span><span class="cd">  <i class="k">测点</i><i class="b">/</i><i class="g">直角坐标</i>,  <i class="n">54.1858</i>, <i class="n">64.6624</i>, <i class="n">30</i></span></div>
<div class="ln"><span class="no">69</span><span class="cd">  <i class="k">测点</i><i class="b">/</i><i class="g">直角坐标</i>,  <i class="n">59.6927</i>, <i class="n">35.2011</i>, <i class="n">30</i></span></div>
<div class="ln"><span class="no">70</span><span class="cd"><i class="k">测量结束</i></span></div>
<div class="ln"><span class="no">71</span><span class="cd">D<i class="t">(CRD3)</i> = <i class="k">建立坐标系</i>/FA<i class="t">(DATUM-A)</i>, <i class="b">Z</i><i class="k">向</i></span></div>
<div class="ln"><span class="no">72</span><span class="cd">F<i class="t">(DATUM-B)</i>=<i class="k">元素定义</i><i class="b">/</i><i class="k">直线</i>,<i class="k">有边界的</i>,<i class="g">直角</i></span></div>
<div class="ln"><span class="no">73</span><span class="cd"><i class="c">$$ Measurement points are created thro</i></span></div>
<div class="ln"><span class="no">74</span><span class="cd"><i class="c">$$ CALL/M(EASI_CLEARPLN_GOTO), 1, 59.6</i></span></div>
<div class="ln"><span class="no">75</span><span class="cd"><i class="k">测量</i><i class="b">/</i><i class="k">直线</i>, F<i class="t">(DATUM-B)</i>, <i class="n">3</i></span></div>
<div class="ln"><span class="no">76</span><span class="cd">  <i class="k">定位</i><i class="b">/</i><i class="g">直角坐标</i>,    <i class="n">59.6927</i>, <i class="n">35.2011</i>,</span></div>
<div class="ln"><span class="no">77</span><span class="cd">  <i class="k">定位</i><i class="b">/</i><i class="g">直角坐标</i>,     <i class="n">4.9266</i>, <i class="n">-3.0000</i>,</span></div>
<div class="ln"><span class="no">78</span><span class="cd">  <i class="k">测点</i><i class="b">/</i><i class="g">直角坐标</i>,   <i class="n">4.9266</i>,  <i class="n">0.0000</i>, <i class="n">25</i></span></div>
<div class="ln"><span class="no">79</span><span class="cd">  <i class="k">测点</i><i class="b">/</i><i class="g">直角坐标</i>,  <i class="n">61.9847</i>,  <i class="n">0.0000</i>, <i class="n">25</i></span></div>
<div class="ln"><span class="no">80</span><span class="cd">  <i class="k">测点</i><i class="b">/</i><i class="g">直角坐标</i>, <i class="n">148.7200</i>,  <i class="n">0.0000</i>, <i class="n">25</i></span></div>
<div class="ln"><span class="no">81</span><span class="cd"><i class="k">测量结束</i></span></div>
<div class="ln"><span class="no">82</span><span class="cd">F<i class="t">(DATUM-C)</i>=<i class="k">元素定义</i><i class="b">/</i><i class="k">直线</i>,<i class="k">有边界的</i>,<i class="g">直角</i></span></div>
<div class="ln"><span class="no">83</span><span class="cd"><i class="c">$$ Measurement points are created thro</i></span></div>
<div class="ln"><span class="no">84</span><span class="cd"><i class="c">$$ CALL/M(EASI_CLEARPLN_GOTO), 1, 148.</i></span></div>
<div class="ln"><span class="no">85</span><span class="cd"><i class="k">测量</i><i class="b">/</i><i class="k">直线</i>, F<i class="t">(DATUM-C)</i>, <i class="n">3</i></span></div>
<div class="ln"><span class="no">86</span><span class="cd">  <i class="k">定位</i><i class="b">/</i><i class="g">直角坐标</i>,   <i class="n">148.7200</i>, <i class="n">-3.0000</i>,</span></div>
<div class="ln"><span class="no">87</span><span class="cd">  <i class="k">定位</i><i class="b">/</i><i class="g">直角坐标</i>,    <i class="n">-3.0000</i>,  <i class="n">8.2145</i>,</span></div>
<div class="ln"><span class="no">88</span><span class="cd">  <i class="k">测点</i><i class="b">/</i><i class="g">直角坐标</i>,   <i class="n">0.0000</i>,  <i class="n">8.2145</i>, <i class="n">25</i></span></div>
<div class="ln"><span class="no">89</span><span class="cd">  <i class="k">测点</i><i class="b">/</i><i class="g">直角坐标</i>,   <i class="n">0.0000</i>, <i class="n">68.6785</i>, <i class="n">25</i></span></div>
<div class="ln"><span class="no">90</span><span class="cd">  <i class="k">测点</i><i class="b">/</i><i class="g">直角坐标</i>,   <i class="n">0.0000</i>, <i class="n">93.9969</i>, <i class="n">25</i></span></div>
<div class="ln"><span class="no">91</span><span class="cd"><i class="k">测量结束</i></span></div>
<div class="ln"><span class="no">92</span><span class="cd">F<i class="t">(PT_INTER1)</i>=<i class="k">元素定义</i><i class="b">/</i><i class="k">点</i>,<i class="g">直角坐标</i>,<i class="n">0.00</i></span></div>
<div class="ln"><span class="no">93</span><span class="cd"><i class="k">构造</i><i class="b">/</i><i class="k">点</i>,F<i class="t">(PT_INTER1)</i>,<i class="k">相交</i>,FA<i class="t">(DATUM-B)</i>,</span></div>
<div class="ln"><span class="no">94</span><span class="cd">D<i class="t">(CRD4)</i> = <i class="k">建立坐标系</i>/FA<i class="t">(DATUM-A)</i>, <i class="b">Z</i><i class="k">向</i>,</span></div>
<div class="ln"><span class="no">95</span><span class="cd">D<i class="t">(CRD4)</i> = <i class="k">平移</i><i class="b">/Z</i><i class="k">轴原点</i>, -<i class="n">30</i>, <i class="b">Y</i><i class="k">轴原点</i>,</span></div>
<div class="ln"><span class="no">96</span><span class="cd"><i class="n">$$ Set.CAD2PCS.CADM_1</i></span></div>
<div class="ln"><span class="no">7<svg class="yarrow" viewBox="0 0 14 16"><path fill="#ffee20" stroke="#000" d="M1 5H7V1L13 8 7 15V11H1z"/></svg></span><span class="cd cur"></span></div>
            </div>
            <div class="vs">
              <span class="vsb"><i class="tup"></i></span><span class="vsp"></span><span class="vst"></span><span class="vsb"><i class="tdn"></i></span>
            </div>
            <div class="hsc"><span class="hsa">‹</span><span class="hst"></span><span class="hsa end">›</span></div>
          </div>
        </div>
      </section>
    </div>

    <div class="lower">
      <section class="lp">
        <div class="lpband"></div>
        <div class="bgrid">
          <span class="bb"><svg class="i32" viewBox="0 0 32 32"><use href="#cube" x="9" y="7" width="22" height="24"/><path stroke="#444" stroke-width="2.500" d="M4 3V20M9 3V14"/><circle cx="5" cy="22" r="2" fill="#d22"/></svg></span>
          <span class="bb"><svg class="i32" viewBox="0 0 32 32"><path fill="#7fa5cf" stroke="#34588a" d="M12 2V24H30z"/><path fill="#e8eef6" d="M16 12V20H23z"/><path fill="#7fa5cf" stroke="#34588a" d="M3 20H30V26H3z"/><path stroke="#34588a" d="M7 20V23M11 20V23M15 20V23M19 20V23M23 20V23"/></svg></span>
          <span class="bb"><svg class="i32" viewBox="0 0 32 32"><path fill="#222" d="M10 2H22V18H10z"/><circle cx="16" cy="8" r="3" fill="#d22"/><circle cx="16" cy="22" r="5" fill="#222"/><path stroke="#888" stroke-width="1.600" d="M15 26 11 31"/></svg></span>
          <span class="bb"><svg class="i32" viewBox="0 0 32 32"><path fill="#e9c46a" stroke="#6a4a10" d="M2 3H30V11H2z"/><text class="fcf" x="4" y="10">⊥ 08 A</text><path fill="#d8a070" stroke="#6a4a20" d="M7 13H25V25L16 31 7 25z"/><path fill="none" stroke="#6a4a20" d="M7 13 16 19 25 13M16 19V31"/></svg></span>
          <span class="bb sl"><svg class="i32" viewBox="0 0 32 32"><use href="#axes" width="32" height="32"/></svg></span>
          <span class="bb"><svg class="i32" viewBox="0 0 32 32"><path fill="#222" d="M3 20H22V29H3z"/><path fill="#999" stroke="#333" d="M8 4H14V20H8z"/><path fill="none" stroke="#555" stroke-width="3" d="M26 3V29"/><circle cx="26" cy="6" r="4" fill="#eee" stroke="#555"/><circle cx="26" cy="26" r="4" fill="#eee" stroke="#555"/></svg></span>
        </div>
      </section>

      <section class="mp">
        <div class="mtb">
          <span class="bt m1"><svg class="i"><use href="#axes"/></svg></span>
          <span class="bt"><svg class="i" viewBox="0 0 24 24"><use href="#axes"/><path fill="none" stroke="#333" stroke-width="2" d="M4 6Q12 0 20 6"/></svg></span>
          <span class="bt sl"><svg class="i" viewBox="0 0 24 24"><use href="#axes" width="18" height="24"/><path fill="#b5762e" d="M16 5H22V8H20V22H18V8H16z"/></svg></span>
          <span class="bt"><svg class="i" viewBox="0 0 24 24"><path fill="#9fb4cc" d="M2 23 6 13H18L22 23z"/><path stroke="#1428c8" stroke-width="2" d="M8 15V3M16 15V3"/><path stroke="#1a9a3a" stroke-width="2" d="M12 15V2"/><circle cx="8" cy="9" r="1.500" fill="#d22"/><circle cx="16" cy="9" r="1.500" fill="#d22"/></svg></span>
          <span class="bt"><svg class="i" viewBox="0 0 24 24"><use href="#axes" width="18" height="24"/><circle cx="21" cy="12" r="1.500" fill="#d22"/><circle cx="3" cy="12" r="1.500" fill="#d22"/></svg></span>
          <span class="bt"><svg class="i" viewBox="0 0 24 24"><use href="#axes" width="20" height="24"/><path stroke="#1a9a3a" stroke-width="1.500" d="M17 4V14M21 4V14"/></svg></span>
          <span class="bt"><svg class="i" viewBox="0 0 24 24"><use href="#cube"/><circle cx="8" cy="14" r="1.500" fill="#d22"/><circle cx="17" cy="10" r="1.500" fill="#d22"/><circle cx="12" cy="6" r="1.500" fill="#d22"/></svg></span>
          <span class="bt"><svg class="i" viewBox="0 0 24 24"><path stroke="#d22" stroke-width="3" stroke-dasharray="2.500 3" fill="none" d="M3 3H21M2 9V20M22 9V20"/><text class="mi" x="7" y="20">M</text></svg></span>
          <span class="bt"><svg class="i" viewBox="0 0 24 24"><use href="#axes" x="4" width="20" height="24"/><path stroke="#222" stroke-width="2" d="M2 4H10M2 8H10"/></svg></span>
          <span class="bt"><svg class="i" viewBox="0 0 24 24"><use href="#axes" width="16" height="18"/><text class="mi mis" x="8" y="23">321</text></svg></span>
          <span class="msep"></span>
          <span class="bt"><svg class="i" viewBox="0 0 24 24"><path fill="#7cd050" d="M12 2 22 7 12 12 2 7z"/><path fill="#3a9a30" d="M2 7 12 12V23L2 18z"/><path fill="#1f6a20" d="M22 7 12 12V23L22 18z"/><circle cx="8" cy="15" r="1.300" fill="#d22"/><circle cx="17" cy="13" r="1.300" fill="#d22"/></svg></span>
          <span class="bt"><svg class="i" viewBox="0 0 24 24"><use href="#axes" x="3" width="18" height="15"/><text class="mi cadm" x="1" y="23">CAD</text></svg></span>
          <span class="bt"><svg class="i" viewBox="0 0 24 24"><use href="#ger"/><use href="#axes" width="14" height="14"/></svg></span>
          <span class="bt"><svg class="i" viewBox="0 0 24 24"><use href="#axes" x="4" y="4" width="16" height="16"/><path stroke="#d22" stroke-width="3" stroke-dasharray="2.500 3" fill="none" d="M3 3H21M2 9V20M22 9V20"/></svg></span>
          <span class="msep"></span>
          <span class="bt"><svg class="i" viewBox="0 0 24 24"><use href="#axes" width="18" height="18"/><text class="mi mis" x="3" y="24">MAP</text></svg></span>
          <span class="bt"><svg class="i" viewBox="0 0 24 24"><use href="#axes" width="14" height="20"/><use href="#pip" x="8" y="2" width="16" height="16"/></svg></span>
        </div>
        <div class="mform">
          <div class="fl">
            <div class="fh">坐标 3-2-1 设置</div>
            <div class="fgrid">
              <span class="lb">当前坐标</span><span class="fld dis">CRD4</span>
              <span class="lb">新坐标系</span><span class="fld">CRD5</span>
            </div>
          </div>
          <div class="fr">
            <span class="cbx">+Z方向<i class="tri"></i></span>
            <svg class="fi"><use href="#fpla"/></svg>
            <span class="fld">DATUM-A</span>
            <span class="lb lbp">本元素Z值</span>
            <span class="hs1">#</span>
            <span class="fld">30</span>

            <span class="cbx">+X方向<i class="tri"></i></span>
            <svg class="fi"><use href="#flin"/></svg>
            <span class="fld">DATUM-B</span>
            <span class="lb lbp">本元素Y值</span>
            <svg class="fi"><use href="#fpt"/></svg>
            <span class="fld">PT_INTER1</span>

            <span class="lb">X原点元素</span>
            <svg class="fi"><use href="#fpt"/></svg>
            <span class="fld">PT_INTER1</span>
            <span class="lb lbp">本元素X值</span>
            <span class="hs1">#</span>
            <span class="fld">0</span>

            <label class="chk"><i class="box"></i>更新理论值</label>
            <div class="btns"><span class="btn w63">预览</span><span class="btn w92">添加坐标系</span><span class="btn w104">添加/激活坐标系</span></div>
          </div>
        </div>
      </section>

      <section class="rp">
        <div class="rform">
          <span class="lb rl">接近距离</span><span class="fld">2.0000</span>
          <span class="lb rl">回退距离</span><span class="fld">2.0000</span>
          <span class="lb rl">深度</span><span class="fld">0.0000</span>
          <svg class="fi ri"><use href="#fpla"/></svg><span class="cbx">PLN1<i class="tri"></i></span><span class="fld">35.0000</span>
          <span class="lb rl">搜索距离</span><span class="fld">10.0000</span>
          <span class="btn apply">应用</span>
        </div>
        <div class="rtabs">
          <span class="rt"><svg class="i"><use href="#probe"/></svg></span>
          <span class="rt"><svg class="i"><use href="#cube"/></svg></span>
          <span class="rt act"><svg class="i" viewBox="0 0 24 24"><circle cx="12" cy="12" r="7" fill="#f0c040" stroke="#806010" stroke-width="3"/><circle cx="12" cy="12" r="10" fill="none" stroke="#a07818" stroke-width="3" stroke-dasharray="3 3"/><circle cx="12" cy="12" r="3" fill="#fff"/></svg></span>
          <span class="rt"><svg class="i" viewBox="0 0 24 24"><use href="#cube" x="6" y="6" width="16" height="16"/><path stroke="#333" stroke-width="2" d="M4 1V15M8 1V10"/></svg></span>
          <span class="rt"><svg class="i"><use href="#cube"/></svg></span>
          <span class="rarr"><i class="td"></i><i class="tu"></i></span>
        </div>
      </section>
    </div>

    <footer class="status">
      <span class="smsg">Measurement completed</span>
      <span class="cbx sb">毫米<i class="tri"></i></span>
      <span class="cbx sb">角度<i class="tri"></i></span>
      <span class="cbx sb sbl">Ca</span>
    </footer>
  </div>

  <div class="menu">
    <div class="mi1">操纵器<i class="mar"></i></div>
    <div class="mi1">视图<i class="mar"></i></div>
    <div class="mi1 hot">模型对齐</div>
    <div class="mi1">居中CAD模型</div>
    <div class="mi1">作为旋转中心</div>
    <div class="mi1">隐藏模型</div>
    <div class="mi1 off">显示PMI</div>
    <div class="mi1"><span class="chkm">✔</span>可选取</div>
    <div class="mi1">删除</div>
    <div class="mi1">测量点栅格</div>
    <div class="mi1">设置模型默认坐标系</div>
  </div>

  <div class="csdn">CSDN @山涧果子</div>
  <div class="ime">
    <span class="ims">S</span><span class="ima">A</span><span class="imp">,</span>
    <svg class="imi" viewBox="0 0 20 20"><path fill="none" stroke="#1a6fd0" stroke-width="2.500" d="M4 6Q4 14 10 14T16 6M10 14V20"/><rect x="7" y="0" width="6" height="11" rx="3" fill="#1a6fd0"/></svg>
    <svg class="imi" viewBox="0 0 20 20"><path fill="#1a6fd0" d="M1 2H19V18H1z"/><path stroke="#fff" stroke-dasharray="2 2" stroke-width="2" d="M3 6H17M3 10H17M5 14H15"/></svg>
    <svg class="imi" viewBox="0 0 20 20"><path fill="#1a6fd0" d="M6 1 10 3 14 1 20 5 17 9 15 8V20H5V8L3 9 0 5z"/></svg>
    <svg class="imi" viewBox="0 0 20 20"><rect x="1" y="1" width="8" height="8" rx="2" fill="#c25ab0"/><rect x="11" y="1" width="8" height="8" rx="2" fill="#4c8fe0"/><rect x="1" y="11" width="8" height="8" rx="2" fill="#e06a40"/><rect x="11" y="11" width="8" height="8" rx="2" fill="#50b060"/></svg>
  </div>
</div>
</body>
</html>
```
FILE: styles.css
```css
*{box-sizing:border-box}
html,body{margin:0;padding:0;overflow:hidden}
body{width:1919px;height:1033px;font:12px/1.2 "Liberation Sans","Noto Sans CJK SC",sans-serif;color:#000}
i{font-style:normal}
.defs{position:absolute}
.app{position:relative;width:1919px;height:1033px;display:flex;flex-direction:column;background:#3b3c60;overflow:hidden}

.titlebar{height:39px;flex:none;display:flex;align-items:flex-start;padding:3px 5px 0 7px;background:linear-gradient(#5a5b7a 0,#55567a 16px,#3f4062 17px,#3b3c5e 100%)}
.appbtn{width:70px;height:30px;border:1px solid #2c2d48;border-radius:4px;background:#45466a;display:flex;align-items:center;gap:4px;padding-left:8px}
.ic26{width:26px;height:26px}.ic20{width:18px;height:22px}
.title{margin:1px 0 0 6px;font-size:14px;font-weight:bold;color:#e4e4ea;white-space:nowrap;letter-spacing:-.1px}
.winr{margin-left:auto;display:flex;align-items:flex-start;gap:0}
.ic24{width:36px;height:24px;margin-top:8px}
.wmid{margin-left:10px;margin-right:24px}
.winb{width:31px;height:19px;margin:2px 0 0 4px;border:1px solid #2c2d48;border-radius:3px;background:#55567a;color:#b0b2c2;text-align:center;line-height:17px;font-size:14px;font-weight:bold}

.frame{position:relative;flex:1;margin:0 4px 0 5px;border-radius:9px 9px 0 0;display:flex;flex-direction:column;min-height:0;background:linear-gradient(#b7e7f4 0,#eaf5f8 28px,#e6edf5 100%);overflow:hidden}
.upper{height:796px;flex:none;display:flex;padding-left:7px}
.viewcol{width:1170px;flex:none;display:flex;flex-direction:column}
.tabs{height:29px;flex:none;display:flex;padding-left:8px}
.tab{width:85px;display:flex;align-items:center;justify-content:center;border-right:1px solid #cfe0e4}
.tab.on{background:linear-gradient(#d8eff4,#f5f6f6);border-right:1px solid #bbb}
.tab .i,.subtabs .i,.ctools .i{width:18px;height:18px}
.i{width:22px;height:22px;display:block;flex:none}
.i14{width:14px;height:14px}
.i26{width:26px;height:26px;display:block}
.i32{width:34px;height:34px;display:block}

.toolbar{height:32px;flex:none;display:flex;align-items:center;padding-left:7px;border:1px solid #c9c9c9;border-radius:4px;background:linear-gradient(#f8f8f8,#ececec)}
.bt{position:relative;width:26px;height:26px;display:flex;align-items:center;justify-content:center;flex:none;margin-right:6px}
.sl{background:linear-gradient(#fff2c8,#ffc874);outline:1px solid #e8a040;outline-offset:-1px;border-radius:3px}
.car{width:0;height:0;border:4px solid transparent;border-top:4px solid #111;border-bottom:0;margin:0 8px 0 -1px}
.cn{margin-right:6px}
.ax{margin-left:2px}
.cm{margin-left:-2px}
.sp{margin-left:-3px}
.sx{margin-left:0}
.co::after{content:"";position:absolute;right:0;bottom:1px;width:0;height:0;border-left:6px solid transparent;border-bottom:6px solid #1a6fd0}

.viewport{position:relative;margin-top:3px;height:729px;flex:none;overflow:hidden;background:linear-gradient(#e6edf8 0,#c3d4ec 26%,#93b0dc 66%,#6c94d4 100%)}
.model{position:absolute;left:308px;top:187px;width:620px;height:300px}
.mtext{font:bold 44px "Liberation Sans",sans-serif;fill:#6a4528}
.mz{font:32px "Liberation Sans",sans-serif;fill:#1e3ad8}
.lab{position:absolute;height:20px;border:1px solid #000;background:#f0587c;color:#111;text-align:center;line-height:18px;font-size:11px;white-space:nowrap}
.lab-c{left:354px;top:240px;width:56px}
.lab-p{left:339px;top:356px;width:28px}
.lab-i{left:321px;top:397px;width:66px}
.lab-bb{left:830px;top:403px;width:28px;height:21px}
.lab-b{left:836px;top:402px;width:57px}
.triad{position:absolute;left:28px;top:597px;width:120px;height:120px}
.tz{font:11px "Liberation Sans",sans-serif;fill:#d8c820}
.pinpanel{position:absolute;left:5px;top:6px;width:35px;height:304px;display:flex;flex-direction:column;align-items:center;background:#fff;border:2px solid #5a6a78;box-shadow:inset 0 0 0 1px #a8e0f4}
.pinhead{width:100%;height:19px;border-bottom:1px solid #ddd;display:flex;justify-content:flex-end;align-items:center;padding-right:4px;flex:none}
.pb{height:31px;width:25px;display:flex;align-items:center;justify-content:center;flex:none}
.pb.sl{height:24px;margin:3px 0 4px}

.treecol{width:340px;margin-left:4px;flex:none;display:flex;flex-direction:column}
.subtabs{height:29px;flex:none;display:flex;align-items:center;gap:6px;padding-left:14px}
.subtab{position:relative;width:51px;height:29px;display:flex;align-items:center;justify-content:center;background:linear-gradient(#d8eff4,#f6f6f6)}
.subtab .i{width:20px;height:20px}
.st1{margin-left:22px}
.treepanel{height:762px;flex:none;background:#fff;border:1px solid #bdbdbd;border-radius:5px;display:flex;flex-direction:column;overflow:hidden}
.thead{height:22px;flex:none;display:flex;align-items:center;background:linear-gradient(#fafafa,#e9e9e9);border-bottom:4px solid #f4dca8;font-size:12px}
.hid{width:18px;padding-left:2px}
.hth{width:170px;text-align:center;border-left:1px solid #ccc;border-right:1px solid #ccc;margin-right:-1px;font-size:13px}
.hac{flex:1;text-align:center;font-size:13px}
.tbody{position:relative;flex:1;min-height:0;overflow:hidden;background:linear-gradient(90deg,transparent 18px,#e5e5e5 18px,#e5e5e5 19px,transparent 19px,transparent 188px,#e5e5e5 188px,#e5e5e5 189px,transparent 189px)}
.wm{position:absolute;left:0;top:0}
.wmt{font:bold 20px "Liberation Sans",sans-serif;fill:#f2f2f2}
.rows{position:relative}
.row{height:18px;display:flex;align-items:center;white-space:nowrap}
.id{width:18px;flex:none;text-align:right;padding:1px 3px 0 0}
.th{width:170px;flex:none;display:flex;align-items:center;height:18px;padding-left:5px}
.ex{position:relative;width:10px;height:10px;border:1px solid #777;flex:none;margin-right:2px;background:#fff}
.ex::after{content:"";position:absolute;left:1px;right:1px;top:3px;height:1px;background:#222}
.ti{width:16px;height:16px;margin-right:4px;flex:none}
.gp{padding-left:9px}
.dt{width:9px;height:0;border-top:1px dotted #666;flex:none}
.ch{padding:1px 0 0 26px;font-size:11.500px}
.lt{font-size:11.500px;padding-top:1px}
.el{width:7px;height:18px;flex:none;margin:-1px 5px 0 0;border-left:1px dotted #777;background:linear-gradient(#777,#777) no-repeat 0 8px/6px 1px}
.pu{color:#6f6fd8}
.ac{padding-left:2px}
.gn{color:#14867a}.bl{color:#2a2af0}.pl{color:#7b80f0}.bk{color:#111}
.cadt{font:bold 10px "Liberation Sans",sans-serif;color:#2a4f9c;width:16px;margin-right:4px;flex:none;transform:scaleX(.72);transform-origin:left center}
.rsel{background:#ffd46e}
.rsel .id{background:#ffdd8a}
.selt{display:block}
.hs{height:18px;flex:none;display:flex;align-items:center;gap:17px;padding:0 2px;background:#fff}
.hbtn{width:17px;height:17px;background:#e4eef3;border:1px solid #c3d2da;display:flex;align-items:center;justify-content:center;flex:none}
.htrack{flex:1;height:15px;background:#dce9ef;border:1px solid #c3d2da}
.tl{border:5px solid transparent;border-right:5px solid #123;border-left:0}
.tr{border:5px solid transparent;border-left:5px solid #123;border-right:0}

.codecol{width:378px;margin-left:6px;flex:none;display:flex;flex-direction:column}
.sc{padding-left:13px}
.st2{margin-left:22px}
.codepanel{height:762px;flex:none;background:#f3f3f3;border:1px solid #bdbdbd;border-radius:5px;display:flex;flex-direction:column;overflow:hidden}
.ctools{height:28px;flex:none;display:flex;align-items:center;gap:12px;padding:1px 0 0 7px}
.cgrid{flex:1;min-height:0;display:grid;grid-template-columns:32px 326px 17px;grid-template-rows:715px 18px}
.cside{grid-row:1/3;grid-column:1;display:flex;flex-direction:column;align-items:center;overflow:hidden;padding-top:1px}
.cb{position:relative;width:24px;height:28px;display:flex;align-items:center;justify-content:center;flex:none}
.cb .i{width:20px;height:20px}
.cb.sl{height:23px}
.s1{margin:0 0 1px}
.s2{margin:2px 0 1px}
.csep{width:30px;height:1px;flex:none;background:#bcbcbc;margin:5px 0 3px}
.editor{grid-row:1;grid-column:2;background:#cdd6f0;overflow:hidden;position:relative}
.ln{height:13px;display:flex;font:13.33px/13px "Liberation Mono",monospace;white-space:pre}
.no{position:relative;width:24px;flex:none;background:#e9e9e9;border-right:1px solid #bbb;color:#8f8f8f;text-align:right}
.cd{flex:1 0 auto;color:#000}
.cd.cur{background:#008000}
.k,.g{font:13px/0 "Noto Sans CJK SC",sans-serif;letter-spacing:3px;color:#0000f0}
.g{color:#008000}
.b{color:#0000f0}
.t{color:#005f7f}
.n{color:#800000}
.c{color:#9a9a9a}
.yarrow{position:absolute;left:1px;top:0;width:13px;height:13px}
.vs{grid-row:1;grid-column:3;display:flex;flex-direction:column;align-items:center;background:#f1f1f1;color:#555}
.vsb{height:14px;flex:none;display:flex;align-items:center}
.tup{border:4px solid transparent;border-bottom:5px solid #555;border-top:0}
.tdn{border:4px solid transparent;border-top:5px solid #555;border-bottom:0}
.vsp{height:297px;flex:none}
.vst{flex:1;align-self:stretch;background:#c9c9c9}
.hsc{grid-row:2;grid-column:2/4;display:flex;align-items:center;background:#f1f1f1;color:#333;font:bold 15px "Liberation Sans",sans-serif}
.hsa{width:17px;text-align:center;flex:none}
.hsa.end{margin-left:auto}
.hst{width:110px;height:100%;background:#c9c9c9;margin-left:0}

.lower{height:164px;flex:none;display:flex;gap:3px;padding-left:5px}
.lp,.mp,.rp{background:#fff;border:1px solid #c3c9d0;border-radius:5px;overflow:hidden}
.lp{width:100px;flex:none}
.lpband{height:16px;background:linear-gradient(#e2edfa,#f4f9fd)}
.bgrid{display:grid;grid-template-columns:40px 40px;grid-auto-rows:40px;gap:6px 8px;padding:0 0 0 6px}
.bb{display:flex;align-items:center;justify-content:center;background:#ebebeb;border:1px solid #d2d2d2;border-radius:5px}
.bb.sl{background:linear-gradient(#fff3cc,#ffcb78);outline:1px solid #e8a040;outline-offset:-1px}
.fcf{font:bold 6px "Liberation Sans",sans-serif;fill:#222}
.mp{width:1524px;flex:none;display:flex;flex-direction:column}
.mtb{height:32px;flex:none;display:flex;align-items:center;padding:1px 0 0 5px;background:linear-gradient(#d8e8f8,#f8fbfe);border-bottom:1px solid #d9d9d9}
.mtb .bt{margin-right:5.700px;width:26px}
.mtb .bt.sl{width:24px;height:24px;margin-left:0}
.msep{width:1px;height:26px;background:#c8d2dc;margin:0 6px 0 0;flex:none}
.mi{font:bold 10px "Liberation Serif",serif;fill:#111}
.mis{font:bold 6.500px "Liberation Sans",sans-serif}
.cadm{font:bold 8.500px "Liberation Sans",sans-serif;fill:#1a4fa8}
.mform{flex:1;display:flex;min-height:0}
.fl{width:171px;flex:none;border-right:1px solid #d4d4d4;padding:9px 0 0 12px}
.fh{height:20px;line-height:20px;margin-bottom:8px;font-size:12px}
.fgrid{display:grid;grid-template-columns:67px 86px;grid-auto-rows:20px;row-gap:1px;align-items:center}
.lb{display:flex;align-items:center;height:20px;white-space:nowrap}
.fld{display:flex;align-items:center;height:20px;padding-left:5px;background:#fff;border:1px solid #a4bcd4;border-radius:4px;white-space:nowrap;overflow:hidden;font-size:11px}
.dis{background:#cfe0f6;color:#8a8a8a}
.cbx{position:relative;display:flex;align-items:center;height:20px;padding-left:5px;background:#fff;border:1px solid #a4bcd4;border-radius:4px;white-space:nowrap}
.tri{position:absolute;right:6px;top:6px;width:0;height:0;border:5px solid transparent;border-top:7px solid #14527a;border-bottom:0}
.fr{padding:16px 0 0 9px;display:grid;grid-template-columns:96px 30px 108px 122px 27px 108px;grid-template-rows:20px 20px 20px 38px;row-gap:1px;align-items:center;align-content:start}
.fi{width:15px;height:15px;justify-self:center}
.lbp{padding-left:9px}
.hs1{font:bold 15px "Liberation Sans",sans-serif;color:#2d6fb0;justify-self:start;padding-left:3px}
.chk{grid-column:1/4;align-self:end;padding-left:2px;display:flex;align-items:center;gap:6px;height:20px}
.box{width:14px;height:14px;border:1px solid #8fb0c8;border-radius:4px;background:#fff}
.btns{grid-column:4/7;align-self:end;padding-left:9px;display:flex;gap:6px;height:19px;white-space:nowrap}
.btn{display:flex;align-items:center;justify-content:center;height:19px;background:linear-gradient(#fff,#e6e6e6);border:1px solid #7fa3c7;border-radius:3px;flex:none}
.w63{width:63px}.w92{width:92px}.w104{width:104px}

.rp{width:270px;flex:none;display:flex}
.rform{width:244px;flex:none;padding:12px 0 0 3px;display:grid;grid-template-columns:30px 117px 84px;grid-template-rows:20px 20px 20px 20px 20px 26px;row-gap:4.500px;align-items:center;align-content:start}
.rl{grid-column:2}
.ri{grid-column:1}
.rform .cbx{width:101px}
.apply{grid-column:3;grid-row:6;width:50px;justify-self:end;align-self:end;height:18px;margin:0 1px 0 0;background:linear-gradient(#f8fbfe,#e2ecf6)}
.rtabs{flex:1;display:flex;flex-direction:column;align-items:center;padding-top:3px;background:#fafafa;border-left:1px solid #e3e3e3}
.rt{width:100%;height:29.500px;display:flex;align-items:center;justify-content:center;flex:none}
.rt .i{width:20px;height:20px}
.act{background:#fff;border:1px solid #a0d4f0;border-left:0;border-radius:0 4px 4px 0}
.rarr{display:flex;justify-content:center;gap:2px;margin-top:4px}
.td{border:5px solid transparent;border-top:6px solid #124;border-bottom:0}
.tu{border:5px solid transparent;border-bottom:6px solid #124;border-top:0}

.status{flex:1;min-height:0;display:flex;align-items:center;padding:0 43px 0 8px;background:linear-gradient(#f2f8fd,#a4bcf0);gap:14px}
.smsg{flex:1;font-size:11.500px;padding-top:8px}
.sb{width:84px;flex:none;margin-top:4px}
.sbl{width:150px}

.menu{position:absolute;left:1279px;top:643px;width:161px;height:224px;padding:2px;background:linear-gradient(90deg,#fff 0,#fff 2px,#c8dcf8 2px,#c8dcf8 26px,#fff 26px);border:1px solid #888;box-shadow:3px 3px 4px rgba(0,0,0,.4);display:flex;flex-direction:column;justify-content:center}
.mi1{position:relative;height:20px;flex:none;line-height:20px;padding-left:27px;white-space:nowrap;width:154px}
.hot{background:#ffd36e}
.off{color:#a8a8a8}
.mar{position:absolute;left:144px;top:5px;border:5px solid transparent;border-left:5px solid #111;border-right:0}
.chkm{position:absolute;left:6px;top:0;font-size:12px}
.csdn{position:absolute;left:1768px;top:1006px;width:140px;font-size:16px;color:#777;opacity:.85;white-space:nowrap}
.ime{position:absolute;left:1742px;right:0;top:1024px;height:9px;background:#fff;overflow:visible;display:flex;align-items:flex-start}
.ims{width:25px;height:18px;margin-top:-9px;background:#ee6222;color:#fff;font:bold italic 19px/18px "Liberation Sans",sans-serif;text-align:center;border-radius:3px 3px 0 0;flex:none;overflow:hidden}
.ima{margin:-2px 0 0 12px;font:bold 18px/18px "Liberation Sans",sans-serif;color:#1a6fd0;flex:none;height:11px;overflow:hidden}
.imp{margin:-6px 0 0 14px;font:bold 18px/18px "Liberation Sans",sans-serif;color:#1a6fd0;flex:none;height:15px;overflow:hidden}
.imi{width:14px;height:14px;margin:-4px 0 0 9px;flex:none}
```
